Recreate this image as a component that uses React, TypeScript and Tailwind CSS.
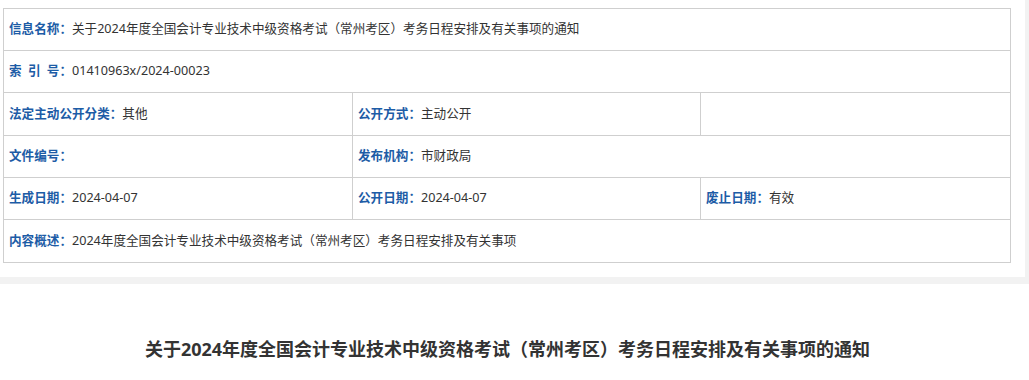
const font = { fontFamily: '"Noto Sans", "Noto Sans CJK SC", sans-serif' }

function Cell({ label, value, className = '' }: { label?: string; value?: string; className?: string }) {
  return (
    <div className={`flex items-center pl-[5px] border-[#cfcfcf] ${className}`}>
      {label && <span className="font-bold text-[#1d5ca6]">{label}：</span>}
      {value && <span className="text-[#333]">{value}</span>}
    </div>
  )
}

export default function App() {
  return (
    <div className="w-[1029px] bg-white text-[12.6px]" style={font}>
      <div className="bg-[#f2f2f2] pr-[4px] pb-[7px]">
        <div className="bg-white pl-[3px] pt-[8px] pr-[14px] pb-[14px]">
          <div className="border border-[#cfcfcf]">
            <Cell
              className="h-[42px] border-b"
              label="信息名称"
              value="关于2024年度全国会计专业技术中级资格考试（常州考区）考务日程安排及有关事项的通知"
            />
            <Cell className="h-[42px] border-b" label={'索\u2002引\u2002号'} value="01410963x/2024-00023" />
            <div className="grid grid-cols-[349px_348px_1fr] h-[43px] border-b border-[#cfcfcf]">
              <Cell className="border-r" label="法定主动公开分类" value="其他" />
              <Cell className="border-r" label="公开方式" value="主动公开" />
              <Cell />
            </div>
            <div className="grid grid-cols-[349px_1fr] h-[42px] border-b border-[#cfcfcf]">
              <Cell className="border-r" label="文件编号" />
              <Cell label="发布机构" value="市财政局" />
            </div>
            <div className="grid grid-cols-[349px_348px_1fr] h-[42px] border-b border-[#cfcfcf]">
              <Cell className="border-r" label="生成日期" value="2024-04-07" />
              <Cell className="border-r" label="公开日期" value="2024-04-07" />
              <Cell label="废止日期" value="有效" />
            </div>
            <Cell
              className="h-[42px]"
              label="内容概述"
              value="2024年度全国会计专业技术中级资格考试（常州考区）考务日程安排及有关事项"
            />
          </div>
        </div>
      </div>
      <div className="h-[97px] pr-[14px] flex items-end justify-center pb-[23px]">
        <h1 className="text-[18px] font-bold text-[#333] leading-none">
          关于2024年度全国会计专业技术中级资格考试（常州考区）考务日程安排及有关事项的通知
        </h1>
      </div>
    </div>
  )
}
